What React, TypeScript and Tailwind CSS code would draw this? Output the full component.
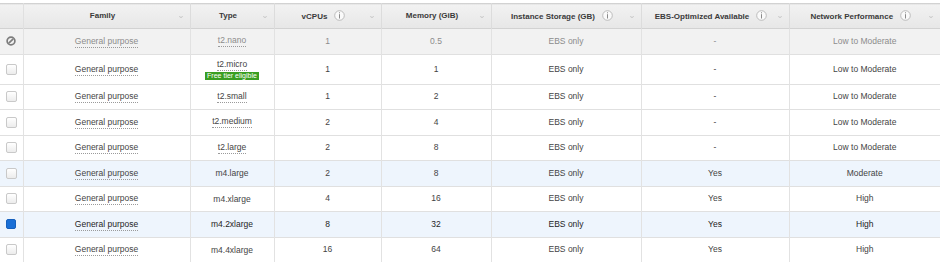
import React from "react";

type Row = {
  type: string;
  vcpu: string;
  mem: string;
  ebs: string;
  net: string;
  t2?: boolean;
  free?: boolean;
  disabled?: boolean;
  selected?: boolean;
  hover?: boolean;
};

const rows: Row[] = [
  { type: "t2.nano", vcpu: "1", mem: "0.5", ebs: "-", net: "Low to Moderate", t2: true, disabled: true },
  { type: "t2.micro", vcpu: "1", mem: "1", ebs: "-", net: "Low to Moderate", t2: true, free: true },
  { type: "t2.small", vcpu: "1", mem: "2", ebs: "-", net: "Low to Moderate", t2: true },
  { type: "t2.medium", vcpu: "2", mem: "4", ebs: "-", net: "Low to Moderate", t2: true },
  { type: "t2.large", vcpu: "2", mem: "8", ebs: "-", net: "Low to Moderate", t2: true },
  { type: "m4.large", vcpu: "2", mem: "8", ebs: "Yes", net: "Moderate", hover: true },
  { type: "m4.xlarge", vcpu: "4", mem: "16", ebs: "Yes", net: "High" },
  { type: "m4.2xlarge", vcpu: "8", mem: "32", ebs: "Yes", net: "High", selected: true },
  { type: "m4.4xlarge", vcpu: "16", mem: "64", ebs: "Yes", net: "High" },
];

function Info() {
  return (
    <svg width="11" height="11" viewBox="0 0 11 11" className="inline-block ml-[7px] align-[-2px]">
      <circle cx="5.5" cy="5.5" r="4.8" fill="#fafafa" stroke="#b5b5b5" strokeWidth="0.9" />
      <rect x="5" y="2.3" width="1" height="1" fill="#8a8a8a" />
      <rect x="5" y="4.2" width="1" height="4.3" fill="#8a8a8a" />
    </svg>
  );
}

// tiny sort marker at the right of each header
function SortArrow() {
  return (
    <svg width="4" height="2" viewBox="0 0 4 2" className="absolute right-[7px] top-[12px]">
      <path d="M0.3 0.5 L2 1.5 L3.7 0.5" fill="none" stroke="#b8b8b8" strokeWidth="0.8" />
    </svg>
  );
}

function Check({ row }: { row: Row }) {
  if (row.disabled)
    return (
      <svg width="10" height="10" viewBox="0 0 10 10" className="mx-auto block">
        <circle cx="5" cy="5" r="3.9" fill="none" stroke="#7d7d7d" strokeWidth="1.7" />
        <line x1="7.2" y1="2.8" x2="2.8" y2="7.2" stroke="#7d7d7d" strokeWidth="1.7" />
      </svg>
    );
  if (row.selected)
    return <div className="mx-auto w-[10px] h-[10px] rounded-[2px] bg-[#1a6fd6] border border-[#1660bd]" />;
  return (
    <div className="mx-auto w-[11px] h-[11px] rounded-[2px] border border-[#c9c9c9] bg-gradient-to-b from-white to-[#ececec]" />
  );
}

const headers: { label: string; info?: boolean }[] = [
  { label: "Family" },
  { label: "Type" },
  { label: "vCPUs", info: true },
  { label: "Memory (GiB)" },
  { label: "Instance Storage (GB)", info: true },
  { label: "EBS-Optimized Available", info: true },
  { label: "Network Performance", info: true },
];

export default function App() {
  return (
    <div className="w-[940px] h-[262px] bg-white overflow-hidden pt-[3px]" style={{ fontFamily: '"Liberation Sans", Arial, sans-serif' }}>
      <table className="table-fixed border-collapse w-[940px] text-[8.5px] text-[#444]">
        <colgroup>
          <col className="w-[23px]" />
          <col className="w-[167px]" />
          <col className="w-[84px]" />
          <col className="w-[107px]" />
          <col className="w-[110px]" />
          <col className="w-[150px]" />
          <col className="w-[148px]" />
          <col className="w-[151px]" />
        </colgroup>
        <thead>
          <tr className="h-[25px] bg-gradient-to-b from-[#f2f2f2] to-[#e7e7e7] border-t border-b border-[#d2d2d2]">
            <th className="border-r border-[#e0e0e0]" />
            {headers.map((h) => (
              <th key={h.label} className="relative border-r border-[#dcdcdc] last:border-r-0 font-bold text-[8px] text-[#3a3a3a] text-center pr-[8px]">
                {h.label}
                {h.info && <Info />}
                <SortArrow />
              </th>
            ))}
          </tr>
        </thead>
        <tbody>
          {rows.map((r) => {
            const bg = r.disabled ? "bg-[#f2f2f2]" : r.selected || r.hover ? "bg-[#eef5fd]" : "bg-white";
            const tc = r.disabled ? "text-[#8c8c8c]" : r.selected ? "text-[#1e1e1e]" : "text-[#444]";
            const cell = "border-r border-[#e2e2e2] text-center";
            return (
              <tr key={r.type} className={`${bg} ${tc} border-b border-[#e0e0e0] ${r.free ? "h-[30px]" : "h-[25.5px]"}`}>
                <td className="border-r border-[#e2e2e2]">
                  <Check row={r} />
                </td>
                <td className={cell}>
                  <span className="border-b border-dotted border-[#9a9a9a] pb-[1px]">General purpose</span>
                </td>
                <td className={cell}>
                  <div className="flex flex-col items-center leading-[10px]">
                    <span className={r.t2 ? "border-b border-dotted border-[#9a9a9a] pb-[1px]" : ""}>{r.type}</span>
                    {r.free && (
                      <span className="mt-[1px] bg-[#3a9e22] text-white text-[7px] leading-[8px] px-[2px]">Free tier eligible</span>
                    )}
                  </div>
                </td>
                <td className={cell}>{r.vcpu}</td>
                <td className={cell}>{r.mem}</td>
                <td className={cell}>EBS only</td>
                <td className={cell}>{r.ebs}</td>
                <td className="text-center">{r.net}</td>
              </tr>
            );
          })}
        </tbody>
      </table>
    </div>
  );
}
